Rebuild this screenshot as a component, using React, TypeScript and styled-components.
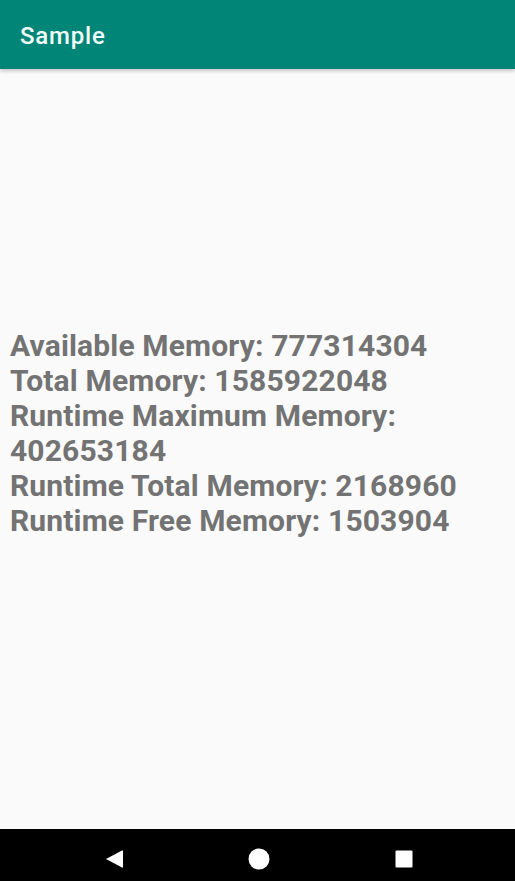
import React from "react";
import styled, { createGlobalStyle } from "styled-components";

const GlobalStyle = createGlobalStyle`
  *, *::before, *::after {
    box-sizing: border-box;
  }
  html, body {
    margin: 0;
    padding: 0;
    background: #fafafa;
  }
  #root {
    height: 881px;
  }
`;

const Screen = styled.div`
  width: 515px;
  height: 881px;
  display: flex;
  flex-direction: column;
  background: #fafafa;
  font-family: Roboto, "Liberation Sans", sans-serif;
  overflow: hidden;
`;

const AppBar = styled.header`
  height: 69px;
  flex: none;
  display: flex;
  align-items: center;
  padding: 2px 20px 0;
  background: #008577;
  box-shadow: 0 2px 4px rgba(0, 0, 0, 0.22);
  position: relative;
  z-index: 1;
`;

const Title = styled.h1`
  margin: 0;
  font-size: 24px;
  font-weight: 500;
  letter-spacing: 0.8px;
  color: #f2fffc;
`;

const Content = styled.main`
  flex: 1;
  padding: 259px 10px 0;
`;

const InfoText = styled.p`
  margin: 0;
  font-size: 30px;
  line-height: 35px;
  font-weight: 700;
  letter-spacing: 0.15px;
  color: #737373;
`;

const NavBar = styled.nav`
  height: 52px;
  flex: none;
  background: #000;
  display: flex;
  align-items: center;
  justify-content: space-between;
  padding: 8px 100px 0 103px;
`;

const NavButton = styled.div`
  width: 22px;
  height: 22px;
  display: flex;
  align-items: center;
  justify-content: center;
`;

const stats = [
  { label: "Available Memory", value: 777314304 },
  { label: "Total Memory", value: 1585922048 },
  { label: "Runtime Maximum Memory", value: 402653184 },
  { label: "Runtime Total Memory", value: 2168960 },
  { label: "Runtime Free Memory", value: 1503904 },
];

export default function App() {
  return (
    <>
      <GlobalStyle />
      <Screen>
        <AppBar>
          <Title>Sample</Title>
        </AppBar>
        <Content>
          <InfoText>
            {stats.map((s, i) => (
              <React.Fragment key={s.label}>
                {s.label}: {s.value}
                {i < stats.length - 1 && <br />}
              </React.Fragment>
            ))}
          </InfoText>
        </Content>
        <NavBar>
          <NavButton>
            <svg width="19" height="20" viewBox="0 0 19 20">
              <path d="M1 10 L17 1.5 Q18 1 18 2.2 L18 17.8 Q18 19 17 18.5 Z" fill="#fff" />
            </svg>
          </NavButton>
          <NavButton>
            <svg width="22" height="22" viewBox="0 0 22 22">
              <circle cx="11" cy="11" r="10.5" fill="#fff" />
            </svg>
          </NavButton>
          <NavButton>
            <svg width="18" height="18" viewBox="0 0 18 18">
              <rect x="0.5" y="0.5" width="17" height="17" rx="1" fill="#fff" />
            </svg>
          </NavButton>
        </NavBar>
      </Screen>
    </>
  );
}
